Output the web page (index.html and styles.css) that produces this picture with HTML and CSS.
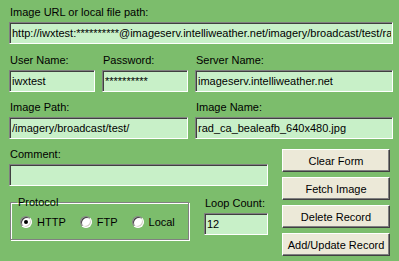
FILE: index.html
```html
<!DOCTYPE html>
<html lang="en">
<head>
    <meta charset="UTF-8">
    <title>Image Record</title>
    <link rel="stylesheet" href="styles.css">
</head>
<body>
<div id="form">
    <div class="field row1">
        <label>Image URL or local file path:</label>
        <input class="box" type="text" value="http://iwxtest:**********@imageserv.intelliweather.net/imagery/broadcast/test/rad_ca_bealeafb_640x480.jpg">
    </div>
    <div class="grid row2">
        <div class="field"><label>User Name:</label><input class="box" type="text" value="iwxtest"></div>
        <div class="field"><label>Password:</label><input class="box" type="text" value="**********"></div>
        <div class="field"><label>Server Name:</label><input class="box" type="text" value="imageserv.intelliweather.net"></div>
    </div>
    <div class="grid row3">
        <div class="field span2"><label>Image Path:</label><input class="box" type="text" value="/imagery/broadcast/test/"></div>
        <div class="field"><label>Image Name:</label><input class="box" type="text" value="rad_ca_bealeafb_640x480.jpg"></div>
    </div>
    <div class="bottom">
        <div class="left">
            <div class="field"><label>Comment:</label><input class="box" type="text" value=""></div>
            <div class="lower">
                <fieldset class="group">
                    <legend>Protocol</legend>
                    <div class="radios">
                        <span class="opt"><i class="radio on"></i>HTTP</span>
                        <span class="opt"><i class="radio"></i>FTP</span>
                        <span class="opt"><i class="radio"></i>Local</span>
                    </div>
                </fieldset>
                <div class="field loop"><label>Loop Count:</label><input class="box" type="text" value="12"></div>
            </div>
        </div>
        <div class="buttons">
            <button>Clear Form</button>
            <button>Fetch Image</button>
            <button>Delete Record</button>
            <button>Add/Update Record</button>
        </div>
    </div>
</div>
</body>
</html>
```

FILE: styles.css
```css
html, body{ margin:0; padding:0; }
body{ background:#7cbd6c; font-family:"Liberation Sans", Arial, sans-serif; font-size:11px; color:#000; }
#form{ width:384px; padding:6px 0 0 9px; }

.field{ display:flex; flex-direction:column; }
.field label{ line-height:13px; height:13px; margin-bottom:3px; padding-left:1px; white-space:nowrap; }
.box{ box-sizing:border-box; height:22px; margin:0; padding:0 1px 0 2px; font:11px "Liberation Sans", Arial, sans-serif; line-height:18px; color:#000; background:#c8f0c8;
      border:1px solid; border-color:#808080 #fff #fff #808080; box-shadow:inset 1px 1px #404040, inset -1px -1px #c8f0c8; outline:none; width:100%; }

.grid{ display:grid; grid-template-columns:86px 86px 198px; column-gap:7px; }
.span2{ grid-column:span 2; }
.row2{ margin-top:10px; }
.row3{ margin-top:9px; }

.bottom{ display:flex; margin-top:9px; }
.left{ width:259px; }
.lower{ display:flex; margin-top:10px; align-items:flex-start; }

.group{ margin:0 0 0 1px; padding:7px 0 11px 9px; width:179px; box-sizing:border-box; border:1px solid #808080; box-shadow:inset 1px 1px #fff, 1px 1px #fff; }
.group legend{ padding:0 1px; margin-left:-3px; line-height:13px; }
.radios{ display:flex; gap:14px; }
.opt{ display:flex; align-items:center; gap:5px; line-height:12px; }
.radio{ display:inline-block; box-sizing:border-box; width:12px; height:12px; border-radius:50%; background:#fff; border:1px solid; border-color:#808080 #fff #fff #808080; box-shadow:inset 1px 1px #404040, inset -1px -1px #d4d0c8; position:relative; }
.radio.on::after{ content:""; position:absolute; left:3px; top:3px; width:4px; height:4px; border-radius:50%; background:#000; }

.loop{ width:64px; margin-left:15px; margin-top:1px; }

.buttons{ display:flex; flex-direction:column; gap:5px; margin-left:14px; margin-top:1px; }
.buttons button{ width:108px; height:23px; margin:0; padding:0; font:11px "Liberation Sans", Arial, sans-serif; color:#000; background:#ece9d8;
      border:1px solid; border-color:#fff #404040 #404040 #fff; box-shadow:inset -1px -1px #808080, inset 1px 1px #ece9d8; }
```
